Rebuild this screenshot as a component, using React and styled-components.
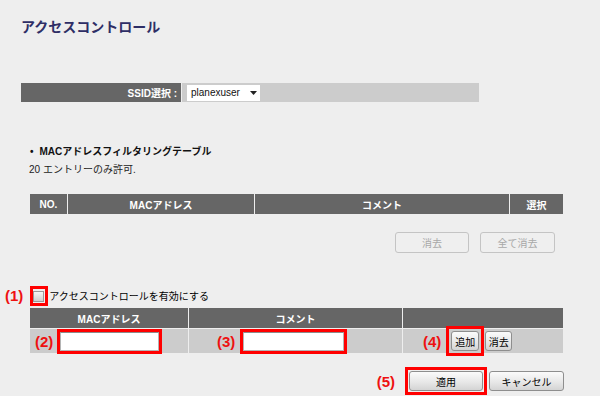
import styled, { createGlobalStyle } from "styled-components";

const GlobalStyle = createGlobalStyle`
  body {
    margin: 0;
    background: #eeeeee;
    font-family: "Liberation Sans", "Noto Sans CJK JP", sans-serif;
  }
`;

const Page = styled.div`
  width: 600px;
  height: 396px;
  overflow: hidden;
  box-sizing: border-box;
  padding-top: 19px;
`;

const Title = styled.h1`
  margin: 0 0 0 21px;
  font-size: 14px;
  line-height: 17px;
  font-weight: bold;
  color: #2e2e66;
`;

const SsidBar = styled.div`
  margin: 47px 0 0 21px;
  width: 458px;
  height: 19px;
  display: grid;
  grid-template-columns: 160px 1fr;
  column-gap: 1px;
`;

const SsidLabel = styled.div`
  background: #666666;
  color: #ffffff;
  font-size: 10px;
  font-weight: bold;
  display: flex;
  align-items: center;
  justify-content: flex-end;
  padding-right: 4px;
`;

const SsidCell = styled.div`
  background: #cccccc;
  display: flex;
  align-items: center;
  padding-left: 5px;
`;

const SelectBox = styled.div`
  width: 73px;
  height: 16px;
  box-sizing: border-box;
  background: #ffffff;
  display: flex;
  align-items: center;
  justify-content: space-between;
  padding: 0 3px 0 4px;
  font-size: 10px;
  color: #111111;
`;

const Caret = styled.svg`
  width: 7px;
  height: 4px;
`;

const Notes = styled.div`
  margin: 41px 0 0 29px;
  font-size: 10px;
  line-height: 18px;
  color: #222222;
`;

const NoteHeading = styled.div`
  font-weight: bold;
  color: #111111;
  display: flex;
  gap: 6px;
  padding-left: 1px;
`;

const Grid = styled.div`
  margin: ${(p) => p.$top}px 0 0 30px;
  width: 533px;
  display: grid;
  grid-template-columns: ${(p) => p.$cols};
  grid-auto-rows: ${(p) => p.$rows};
  gap: 1px;
`;

const HeadCell = styled.div`
  height: 20px;
  background: #666666;
  color: #ffffff;
  font-size: 10px;
  font-weight: bold;
  display: flex;
  align-items: center;
  justify-content: center;
`;

const DataCell = styled.div`
  height: 24px;
  background: #cccccc;
  display: flex;
  align-items: center;
  padding-left: ${(p) => p.$pad}px;
`;

const ActionRow = styled.div`
  margin: ${(p) => p.$top}px 0 0 30px;
  width: ${(p) => p.$width}px;
  box-sizing: border-box;
  padding-right: ${(p) => p.$right}px;
  display: flex;
  justify-content: flex-end;
  align-items: center;
  gap: ${(p) => p.$gap}px;
`;

const Button = styled.button`
  width: ${(p) => p.$w}px;
  height: ${(p) => p.$h}px;
  margin-left: ${(p) => p.$ml || 0}px;
  padding: 0;
  border-radius: 3px;
  font-family: inherit;
  font-size: 10px;
  border: 1px solid ${(p) => (p.disabled ? "#c4c4c4" : "#8e8e8e")};
  color: ${(p) => (p.disabled ? "#a8a8a8" : "#000000")};
  background: ${(p) =>
    p.disabled
      ? "#efefef"
      : "linear-gradient(#fbfbfb, #e6e6e6 60%, #d4d4d4)"};
`;

const EnableRow = styled.div`
  margin: 33px 0 0 5px;
  height: 19px;
  display: flex;
  align-items: center;
`;

const Annot = styled.span`
  color: #ee1111;
  font-size: 15px;
  font-weight: bold;
  line-height: 15px;
  margin-right: ${(p) => p.$gap}px;
`;

const Frame = styled.div`
  border: 3px solid #ff0000;
  padding: ${(p) => p.$pad};
  display: flex;
  align-items: center;
  justify-content: center;
  flex-shrink: 0;
`;

const CheckBox = styled.span`
  width: 9px;
  height: 9px;
  border: 1px solid #9a9a9a;
  background: linear-gradient(#f6f6f6, #cfcfcf);
`;

const EnableLabel = styled.span`
  margin-left: 1px;
  font-size: 10px;
  color: #000000;
`;

const TextField = styled.input`
  width: ${(p) => p.$w}px;
  height: 19px;
  box-sizing: border-box;
  margin: 0;
  border: 1px solid #b4b4b4;
  border-top-color: #8c8c8c;
  background: #ffffff;
`;

export default function App() {
  return (
    <Page>
      <GlobalStyle />
      <Title>アクセスコントロール</Title>

      <SsidBar>
        <SsidLabel>SSID選択 :</SsidLabel>
        <SsidCell>
          <SelectBox>
            <span>planexuser</span>
            <Caret viewBox="0 0 7 4">
              <path d="M0 0h7L3.5 4z" fill="#222" />
            </Caret>
          </SelectBox>
        </SsidCell>
      </SsidBar>

      <Notes>
        <NoteHeading>
          <span>•</span>
          <span>MACアドレスフィルタリングテーブル</span>
        </NoteHeading>
        <div>20 エントリーのみ許可.</div>
      </Notes>

      <Grid $top={15} $cols="37px 186px 254px 53px" $rows="20px">
        <HeadCell>NO.</HeadCell>
        <HeadCell>MACアドレス</HeadCell>
        <HeadCell>コメント</HeadCell>
        <HeadCell>選択</HeadCell>
      </Grid>

      <ActionRow $top={18} $width={533} $right={8} $gap={11}>
        <Button disabled $w={74} $h={21}>消去</Button>
        <Button disabled $w={75} $h={21}>全て消去</Button>
      </ActionRow>

      <EnableRow>
        <Annot $gap={7}>(1)</Annot>
        <Frame $pad="2px 1px 1px 0">
          <CheckBox />
        </Frame>
        <EnableLabel>アクセスコントロールを有効にする</EnableLabel>
      </EnableRow>

      <Grid $top={3} $cols="158px 213px 160px" $rows="auto">
        <HeadCell>MACアドレス</HeadCell>
        <HeadCell>コメント</HeadCell>
        <HeadCell />
        <DataCell $pad={5}>
          <Annot $gap={4}>(2)</Annot>
          <Frame $pad="0">
            <TextField $w={99} />
          </Frame>
        </DataCell>
        <DataCell $pad={28}>
          <Annot $gap={5}>(3)</Annot>
          <Frame $pad="0">
            <TextField $w={101} />
          </Frame>
        </DataCell>
        <DataCell $pad={20}>
          <Annot $gap={5}>(4)</Annot>
          <Frame $pad="2px">
            <Button $w={28} $h={20}>追加</Button>
          </Frame>
          <Button $w={27} $h={20} $ml={1}>消去</Button>
        </DataCell>
      </Grid>

      <ActionRow $top={14} $width={534} $right={0} $gap={2}>
        <Annot $gap={8}>(5)</Annot>
        <Frame $pad="1px">
          <Button $w={74} $h={20}>適用</Button>
        </Frame>
        <Button $w={75} $h={20}>キャンセル</Button>
      </ActionRow>
    </Page>
  );
}
